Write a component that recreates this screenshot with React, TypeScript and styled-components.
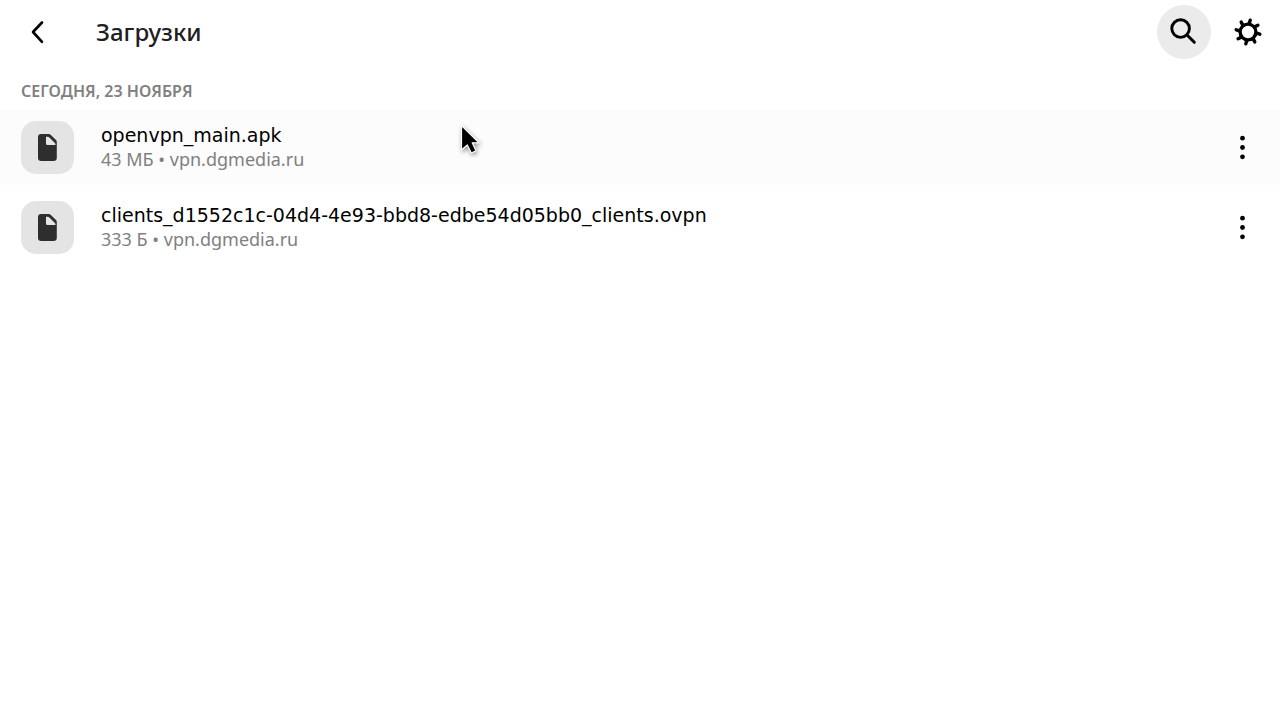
import React from "react";
import styled, { createGlobalStyle } from "styled-components";

const GlobalStyle = createGlobalStyle`
  *, *::before, *::after { box-sizing: border-box; }
  body {
    margin: 0;
    background: #fff;
    color: #000;
    font-family: "Noto Sans", "Open Sans", sans-serif;
  }
`;

const Page = styled.div`
  min-height: 100vh;
  position: relative;
`;

const Header = styled.header`
  display: flex;
  align-items: center;
  height: 64px;
  padding: 0 5px 0 11px;
  gap: 10px;
`;

const IconButton = styled.button<{ $active?: boolean }>`
  flex: none;
  display: flex;
  align-items: center;
  justify-content: center;
  width: 54px;
  height: 54px;
  padding: 0;
  border: 0;
  border-radius: 50%;
  background: ${(p) => (p.$active ? "#ebebeb" : "transparent")};
  cursor: pointer;
`;

const Title = styled.h1`
  flex: 1;
  margin: 0;
  padding-left: 21px;
  font-size: 24px;
  line-height: 32px;
  font-weight: 500;
  color: #1f1f1f;
`;

const DateHeading = styled.h2`
  margin: 0;
  padding: 16px 21px 8px;
  font-size: 16px;
  line-height: 22px;
  font-weight: 600;
  color: #808080;
  text-transform: uppercase;
`;

const List = styled.ul`
  display: flex;
  flex-direction: column;
  gap: 5px;
  margin: 0;
  padding: 0;
  list-style: none;
`;

const Row = styled.li<{ $hovered?: boolean }>`
  display: flex;
  align-items: center;
  height: 75px;
  padding: 0 10px 0 21px;
  background: ${(p) => (p.$hovered ? "#fcfcfc" : "transparent")};
`;

const FileBadge = styled.div`
  flex: none;
  display: flex;
  align-items: center;
  justify-content: center;
  width: 53px;
  height: 53px;
  margin-right: 27px;
  border-radius: 15px;
  background: #e4e4e4;
`;

const FileText = styled.div`
  flex: 1;
  min-width: 0;
  padding-bottom: 2px;
`;

const FileName = styled.div`
  font-family: "DejaVu Sans", sans-serif;
  font-size: 19px;
  line-height: 25px;
`;

const FileMeta = styled.div`
  font-size: 18px;
  line-height: 23px;
  color: #808080;
`;

const Pointer = styled.svg`
  position: absolute;
  left: 456px;
  top: 118px;
  pointer-events: none;
  filter: drop-shadow(1px 2px 2px rgba(0, 0, 0, 0.4));
`;

const BackIcon = () => (
  <svg width="54" height="54" viewBox="0 0 54 54" fill="none" aria-hidden="true">
    <path d="M31 17.5 22 27l9 9.8" stroke="#000" strokeWidth="2.6" strokeLinecap="round" strokeLinejoin="round" />
  </svg>
);

const SearchIcon = () => (
  <svg width="54" height="54" viewBox="0 0 54 54" fill="none" stroke="#000" aria-hidden="true">
    <circle cx="23.6" cy="23.6" r="8.8" strokeWidth="2.9" />
    <path d="m30.3 30.3 7 7" strokeWidth="3" strokeLinecap="round" />
  </svg>
);

const GearIcon = () => (
  <svg width="54" height="54" viewBox="0 0 54 54" aria-hidden="true">
    <g transform="translate(27 27)" stroke="#000">
      <circle r="7.9" fill="none" strokeWidth="3.4" />
      {[0, 1, 2, 3, 4, 5, 6, 7].map((i) => (
        <path
          key={i}
          d="M8.5-.5 12-.1"
          strokeWidth="3.4"
          strokeLinecap="round"
          transform={`rotate(${11 + i * 45})`}
        />
      ))}
    </g>
  </svg>
);

const FileIcon = () => (
  <svg width="53" height="53" viewBox="0 0 53 53" aria-hidden="true">
    <path
      d="M20.2 13h7.6c.7 0 1.3.3 1.8.8l5.400 5.300c.5.6.8 1.2.8 2v15.600a3.200 3.200 0 0 1-3.200 3.200H20.200a3.200 3.200 0 0 1-3.200-3.200V16.200a3.200 3.200 0 0 1 3.200-3.200Z"
      fill="#2e2e2e"
    />
    <path d="M25 15.8h1.600c.8 0 1.400.3 2 .9l5 5c.6.6.9 1.100.9 1.800v.5H26.500a1.500 1.500 0 0 1-1.500-1.500Z" fill="#e4e4e4" />
  </svg>
);

const DotsIcon = () => (
  <svg width="54" height="54" viewBox="0 0 54 54" aria-hidden="true">
    <circle cx="26.5" cy="17.2" r="2.4" />
    <circle cx="26.5" cy="26.5" r="2.4" />
    <circle cx="26.5" cy="35.8" r="2.4" />
  </svg>
);

const files = [
  { name: "openvpn_main.apk", meta: "43 МБ • vpn.dgmedia.ru", hovered: true },
  { name: "clients_d1552c1c-04d4-4e93-bbd8-edbe54d05bb0_clients.ovpn", meta: "333 Б • vpn.dgmedia.ru", hovered: false },
];

export default function App() {
  return (
    <Page>
      <GlobalStyle />
      <Header>
        <IconButton aria-label="Назад">
          <BackIcon />
        </IconButton>
        <Title>Загрузки</Title>
        <IconButton $active aria-label="Поиск">
          <SearchIcon />
        </IconButton>
        <IconButton aria-label="Настройки">
          <GearIcon />
        </IconButton>
      </Header>
      <main>
        <DateHeading>Сегодня, 23 ноября</DateHeading>
        <List>
          {files.map((file) => (
            <Row key={file.name} $hovered={file.hovered}>
              <FileBadge>
                <FileIcon />
              </FileBadge>
              <FileText>
                <FileName>{file.name}</FileName>
                <FileMeta>{file.meta}</FileMeta>
              </FileText>
              <IconButton aria-label="Действия с файлом">
                <DotsIcon />
              </IconButton>
            </Row>
          ))}
        </List>
      </main>
      <Pointer width="30" height="42" viewBox="0 0 30 42" aria-hidden="true">
        <path d="M5.5 7.5V32l5.8-5 4 8 4.7-2.2-3.8-8H23Z" fill="#000" stroke="#fff" strokeWidth="1.2" strokeLinejoin="round" />
      </Pointer>
    </Page>
  );
}
